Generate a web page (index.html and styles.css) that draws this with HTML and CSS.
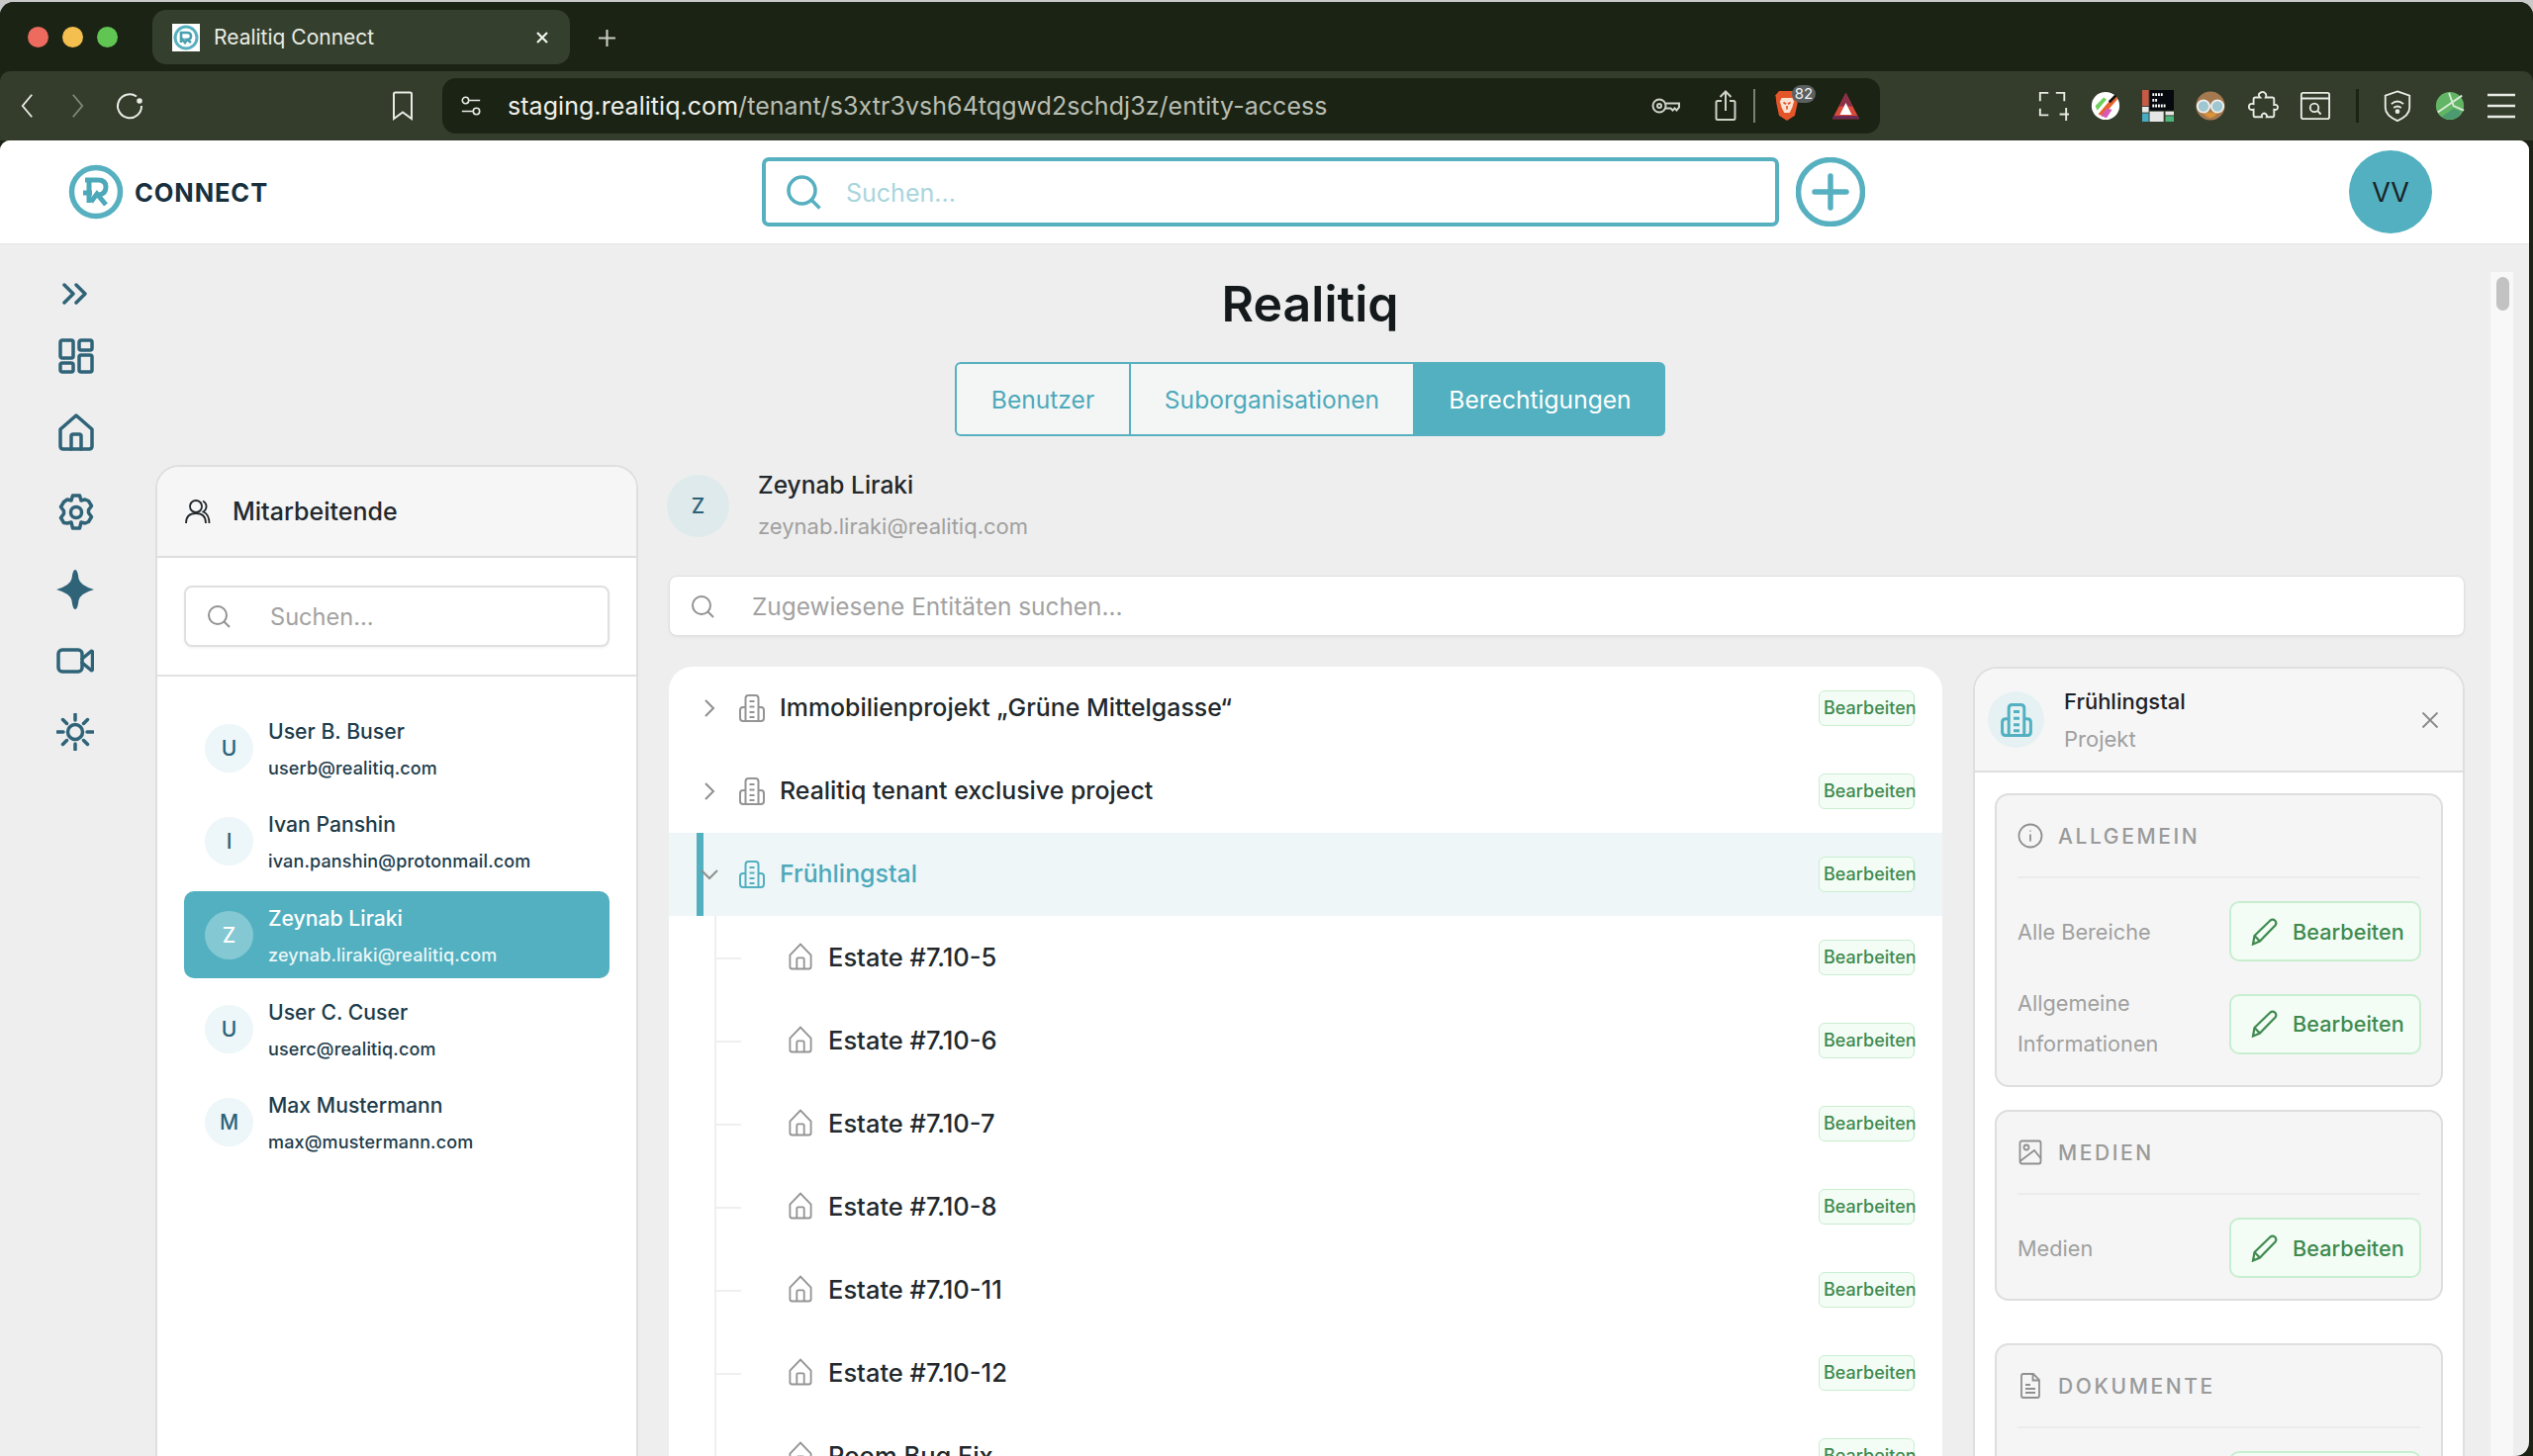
FILE: index.html
```html
<!DOCTYPE html>
<html lang="de">
<head>
<meta charset="utf-8">
<title>Realitiq Connect</title>
<link rel="stylesheet" href="styles.css">
</head>
<body>
<svg class="defs" width="0" height="0" aria-hidden="true">
  <defs>
    <symbol id="i-search" viewBox="0 0 24 24"><circle cx="11" cy="11" r="9"/><path d="M17.5 17.5 23 23"/></symbol>
    <symbol id="i-building" viewBox="0 0 26 30"><path d="M6.500 28V5q0-3 3-3h7q3 0 3 3v23"/><path d="M6.500 14H4q-3 0-3 3v8q0 3 3 3h18q3 0 3-3v-8q0-3-3-3h-2.500"/><path d="M10.500 8h5M10.500 13.500h5M10.500 19h5M10.500 24h5"/></symbol>
    <symbol id="i-house" viewBox="0 0 26 30"><path d="M1.500 13.500 13 1.500l11.500 12V26q0 2.500-2.500 2.500H4q-2.500 0-2.500-2.500z"/><path d="M9 28.500V18q0-1.500 1.500-1.500h5q1.500 0 1.500 1.500v10.500"/></symbol>
    <symbol id="i-pen" viewBox="0 0 28 28"><path d="M2 26.500 3.500 18 19.500 2.500q2.500-1.800 4.800.3 2 2.300.2 4.700L9 23.500z"/><path d="M3.500 18 9 23.500"/></symbol>
    <symbol id="i-chev" viewBox="0 0 12 20"><path d="M2 2l8 8-8 8"/></symbol>
  </defs>
</svg>

<div class="window">
  <div class="tabbar">
    <div class="lights"><span class="light red"></span><span class="light amber"></span><span class="light green"></span></div>
    <div class="tab">
      <svg class="favicon" viewBox="0 0 28 28"><rect width="28" height="28" fill="#fff"/><circle cx="14" cy="14" r="11" fill="none" stroke="#57b0c0" stroke-width="3"/><path d="M9 19V9h6q4 0 4 3.500T15 16l4 3M9 14l4 5 2-3" fill="none" stroke="#4a9fb0" stroke-width="2.600"/></svg>
      <span class="tab-title">Realitiq Connect</span>
      <svg class="tab-close" viewBox="0 0 14 14"><path d="M2 2l10 10M12 2 2 12"/></svg>
    </div>
    <svg class="new-tab" viewBox="0 0 18 18"><path d="M9 1v16M1 9h16"/></svg>
  </div>

  <div class="toolbar">
    <svg class="tb back" viewBox="0 0 16 28"><path d="M13 2 3 14l10 12"/></svg>
    <svg class="tb forward" viewBox="0 0 16 28"><path d="M3 2l10 12L3 26"/></svg>
    <svg class="tb reload" viewBox="0 0 30 30"><path d="M22 5.500A12 12 0 1 0 27 15"/><circle cx="25" cy="10" r="1.800" fill="#e8ebe4"/></svg>
    <svg class="tb bookmark" viewBox="0 0 22 30"><path d="M2 3q0-1.500 1.500-1.500h15Q20 1.500 20 3v25l-9-6.500L2 28z"/></svg>
    <div class="urlbar">
      <svg class="tb tune" viewBox="0 0 24 24"><circle cx="6" cy="6" r="3.500"/><path d="M10 6h12M2 18h12"/><circle cx="18" cy="18" r="3.500"/></svg>
      <span class="url"><span class="url-host">staging.realitiq.com</span>/tenant/s3xtr3vsh64tqgwd2schdj3z/entity-access</span>
      <svg class="tb key" viewBox="0 0 30 20"><circle cx="8" cy="10" r="6.500"/><circle cx="8" cy="10" r="2"/><path d="M14.500 7.500H28v4l-2.500 3-2-2-2 2-2-2h-5"/></svg>
      <svg class="tb share" viewBox="0 0 22 32"><path d="M7 11H3q-1.500 0-1.500 1.500v16Q1.500 30 3 30h16q1.500 0 1.500-1.500v-16Q20.500 11 19 11h-4"/><path d="M11 21V2M5.500 7 11 1.500 16.500 7"/></svg>
      <span class="vline"></span>
      <span class="brave">
        <svg class="brave-shield" viewBox="0 0 28 36"><path d="M5 1h18l4 5-1 9-3 14-9 6-9-6-3-14L1 6z" fill="#e4562a"/><path d="M8 9h12l2 4-2 7-3 6h-6l-3-6-2-7z" fill="#fbe3d4"/><path d="M10 14l3 2M18 14l-3 2M14 18v4" stroke="#e4562a" stroke-width="2" fill="none"/></svg>
        <span class="brave-badge">82</span>
      </span>
      <svg class="bat" viewBox="0 0 34 34"><path d="M17 1 33 32H1z" fill="#d84a3a"/><path d="M17 1 25 17H9z" fill="#8c2f48"/><path d="M17 13 24 27H10z" fill="#fff"/><path d="M1 32h32l-2-4H3z" fill="#6c2a55"/></svg>
    </div>
    <div class="extensions">
      <svg class="tb ext" viewBox="0 0 34 34"><path d="M12 3H3v9M3 20v7h9M20 3h9v9M31 19v14M24 26h14"/></svg>
      <svg class="ext ext-solid" viewBox="0 0 34 34"><circle cx="17" cy="17" r="15" fill="#fff"/><path d="M9 26 26 6q5 0 3 5L14 28z" fill="#e8622d"/><path d="M6 17l9-9 3 2-10 12z" fill="#6ed05a"/><path d="M12 28l6-8 6 1-6 9z" fill="#d65ab6"/><path d="M20 12l7-7 2 2-7 7z" fill="#111"/></svg>
      <svg class="ext ext-solid" viewBox="0 0 34 34"><rect x="8" y="0" width="26" height="22" fill="#05080d"/><rect x="0" y="0" width="7" height="17" fill="#c75a45"/><rect x="0" y="18" width="7" height="6" fill="#e8e8e8"/><rect x="0" y="25" width="7" height="9" fill="#48a9c5"/><rect x="8" y="23" width="15" height="11" fill="#e6e6e6"/><rect x="25" y="23" width="9" height="4" fill="#e6e6e6"/><rect x="25" y="28" width="9" height="6" fill="#4eb47c"/><path d="M11 5h12M11 11h6M11 17h15" stroke="#fff" stroke-width="3" stroke-dasharray="2 1"/></svg>
      <svg class="ext ext-solid" viewBox="0 0 34 34"><circle cx="17" cy="17" r="15.500" fill="#a5794f"/><path d="M9 24q8 12 16 0z" fill="#d9913a"/><circle cx="9.500" cy="17.500" r="6.500" fill="#9fc7cf" stroke="#eee" stroke-width="2"/><circle cx="24.500" cy="17.500" r="6.500" fill="#9fc7cf" stroke="#eee" stroke-width="2"/></svg>
      <svg class="tb ext" viewBox="0 0 34 34"><path d="M13 4q4-4 7 0 1 2 0 4h7q2 0 2 2v6q3-1 4 2 0 4-4 3h0v6q0 2-2 2h-6q1-3-2-4-4 0-3 4H9q-2 0-2-2v-6q-5 1-5-3t5-3v-5q0-2 2-2h5q-2-2-1-4z"/></svg>
      <svg class="tb ext" viewBox="0 0 34 34"><rect x="2" y="3" width="30" height="28" rx="2"/><path d="M2 9h30"/><circle cx="16" cy="19" r="4.500"/><path d="M19.500 22.500 23 26"/></svg>
      <span class="vline dark"></span>
      <svg class="tb ext" viewBox="0 0 34 34"><path d="M17 1.500 30 6v13q0 8-13 14Q4 27 4 19V6z"/><path d="M10.500 15q6.500-5.500 13 0M13 19q4-3 8 0"/><circle cx="17" cy="23" r="1.500" fill="#e8ebe4"/></svg>
      <svg class="ext ext-solid" viewBox="0 0 34 34"><circle cx="17" cy="17" r="15" fill="#62b564"/><path d="M4 24 30 6M16 3l5 14 11 5" stroke="#d7ecd5" stroke-width="2" fill="none"/><path d="M8 29q9 5 18 0l3-6-8-3z" fill="#4b9a72"/></svg>
      <svg class="tb ext menu" viewBox="0 0 30 26"><path d="M1 2h28M1 13h28M1 24h28"/></svg>
    </div>
  </div>

  <div class="app">
    <header class="topbar">
      <div class="logo">
        <svg class="logo-mark" viewBox="0 0 56 56"><circle cx="28" cy="28" r="24.500" fill="none" stroke="#57b0c0" stroke-width="5.500"/><path d="M17 16h13q8 0 8 7t-7 8" fill="none" stroke="#4da9ba" stroke-width="5"/><path d="M21 15v24M15 29h9" fill="none" stroke="#4da9ba" stroke-width="5"/><path d="M23 38l6-8 9 11" fill="none" stroke="#4da9ba" stroke-width="5"/></svg>
        <span class="logo-text">CONNECT</span>
      </div>
      <label class="global-search">
        <svg class="icon search-icon-lg"><use href="#i-search"/></svg>
        <span class="global-placeholder">Suchen...</span>
      </label>
      <span class="spacer"></span>
      <svg class="plus" viewBox="0 0 70 70"><circle cx="35" cy="35" r="32.500"/><path d="M35 19v32M19 35h32"/></svg>
      <div class="avatar-vv">VV</div>
    </header>

    <div class="layout">
      <nav class="rail">
        <svg class="rail-icon rail-chev" viewBox="0 0 26 22"><path d="M2 2l9 9-9 9M14 2l9 9-9 9"/></svg>
        <svg class="rail-icon rail-grid" viewBox="0 0 36 36"><rect x="2" y="2" width="13" height="18" rx="2"/><rect x="21" y="2" width="13" height="10" rx="2"/><rect x="2" y="25" width="13" height="9" rx="2"/><rect x="21" y="17" width="13" height="17" rx="2"/></svg>
        <svg class="rail-icon rail-home" viewBox="0 0 36 38"><path d="M2 16 18 2l16 14v17q0 3-3 3H5q-3 0-3-3z"/><path d="M13 36V23q0-2 2-2h6q2 0 2 2v13"/></svg>
        <svg class="rail-icon rail-gear" viewBox="0 0 36 38"><path d="M14.500 2h7l1.500 5 4-1 3.500 1.500 3 5-3 4v3l3 4-3 5-3.500 1.500-4-1-1.500 6h-7l-1.500-6-4 1L5.500 29.500l-3-5 3-4v-3l-3-4 3-5L9 6l4 1z"/><circle cx="18" cy="19" r="5.500"/></svg>
        <svg class="rail-icon rail-star" viewBox="0 0 38 40"><path class="fill" d="M19 0q2.500 0 3.500 9 1.500 7 15.500 11-14 4-15.500 11Q21.500 40 19 40t-3.500-9Q14 24 0 20q14-4 15.500-11Q16.500 0 19 0z"/></svg>
        <svg class="rail-icon rail-video" viewBox="0 0 38 26"><rect x="2" y="2" width="24" height="22" rx="4"/><path d="M26 11 35 3.500q1.500-.5 1.500 1v17q0 1.500-1.500 1L26 15"/></svg>
        <svg class="rail-icon rail-sun" viewBox="0 0 38 38"><circle cx="19" cy="19" r="7.500"/><path d="M19 1v6M19 31v6M1 19h6M31 19h6M6.500 6.500l4 4M27.500 27.500l4 4M6.500 31.500l4-4M27.500 10.500l4-4"/></svg>
      </nav>

      <main class="content">
        <h1 class="page-title">Realitiq</h1>
        <div class="segments">
          <span class="seg seg-a">Benutzer</span>
          <span class="seg seg-b">Suborganisationen</span>
          <span class="seg seg-c active">Berechtigungen</span>
        </div>

        <div class="columns">
          <section class="staff">
            <div class="staff-head">
              <svg class="staff-icon" viewBox="0 0 26 26"><circle cx="11" cy="8" r="6"/><path d="M1 25q0-10 10-10t10 10M18 2.500q4 2 3.500 6.500-.5 3-3 4.500 6 2.500 6 11.500"/></svg>
              <span>Mitarbeitende</span>
            </div>
            <div class="staff-searchwrap">
              <div class="field staff-field">
                <svg class="icon field-icon"><use href="#i-search"/></svg>
                <span class="placeholder">Suchen...</span>
              </div>
            </div>
            <ul class="people">
              <li class="person"><span class="pav">U</span><span class="ptext"><span class="pname">User B. Buser</span><span class="pmail">userb@realitiq.com</span></span></li>
              <li class="person"><span class="pav">I</span><span class="ptext"><span class="pname">Ivan Panshin</span><span class="pmail">ivan.panshin@protonmail.com</span></span></li>
              <li class="person selected"><span class="pav">Z</span><span class="ptext"><span class="pname">Zeynab Liraki</span><span class="pmail">zeynab.liraki@realitiq.com</span></span></li>
              <li class="person"><span class="pav">U</span><span class="ptext"><span class="pname">User C. Cuser</span><span class="pmail">userc@realitiq.com</span></span></li>
              <li class="person"><span class="pav">M</span><span class="ptext"><span class="pname">Max Mustermann</span><span class="pmail">max@mustermann.com</span></span></li>
            </ul>
          </section>

          <section class="detail">
            <div class="user-head">
              <span class="user-av">Z</span>
              <div class="user-text">
                <div class="user-name">Zeynab Liraki</div>
                <div class="user-mail">zeynab.liraki@realitiq.com</div>
              </div>
            </div>
            <div class="field entity-field">
              <svg class="icon field-icon"><use href="#i-search"/></svg>
              <span class="placeholder">Zugewiesene Entitäten suchen...</span>
            </div>
            <div class="split">
              <div class="tree">
                <div class="row"><svg class="chev"><use href="#i-chev"/></svg><svg class="ricon"><use href="#i-building"/></svg><span class="rname">Immobilienprojekt „Grüne Mittelgasse“</span><span class="badge">Bearbeiten</span></div>
                <div class="row"><svg class="chev"><use href="#i-chev"/></svg><svg class="ricon"><use href="#i-building"/></svg><span class="rname">Realitiq tenant exclusive project</span><span class="badge">Bearbeiten</span></div>
                <div class="row row-open"><svg class="chev chev-down"><use href="#i-chev"/></svg><svg class="ricon"><use href="#i-building"/></svg><span class="rname">Frühlingstal</span><span class="badge">Bearbeiten</span></div>
                <div class="children">
                  <div class="row child"><svg class="ricon"><use href="#i-house"/></svg><span class="rname">Estate #7.10-5</span><span class="badge">Bearbeiten</span></div>
                  <div class="row child"><svg class="ricon"><use href="#i-house"/></svg><span class="rname">Estate #7.10-6</span><span class="badge">Bearbeiten</span></div>
                  <div class="row child"><svg class="ricon"><use href="#i-house"/></svg><span class="rname">Estate #7.10-7</span><span class="badge">Bearbeiten</span></div>
                  <div class="row child"><svg class="ricon"><use href="#i-house"/></svg><span class="rname">Estate #7.10-8</span><span class="badge">Bearbeiten</span></div>
                  <div class="row child"><svg class="ricon"><use href="#i-house"/></svg><span class="rname">Estate #7.10-11</span><span class="badge">Bearbeiten</span></div>
                  <div class="row child"><svg class="ricon"><use href="#i-house"/></svg><span class="rname">Estate #7.10-12</span><span class="badge">Bearbeiten</span></div>
                  <div class="row child"><svg class="ricon"><use href="#i-house"/></svg><span class="rname">Room Bug Fix</span><span class="badge">Bearbeiten</span></div>
                </div>
              </div>

              <aside class="inspector">
                <div class="insp-head">
                  <span class="insp-av"><svg class="insp-building"><use href="#i-building"/></svg></span>
                  <div class="insp-text">
                    <div class="insp-title">Frühlingstal</div>
                    <div class="insp-sub">Projekt</div>
                  </div>
                  <svg class="insp-close" viewBox="0 0 18 18"><path d="M1.500 1.500l15 15M16.500 1.500l-15 15"/></svg>
                </div>
                <div class="insp-body">
                  <div class="card">
                    <div class="card-head">
                      <svg class="card-icon" viewBox="0 0 26 26"><circle cx="13" cy="13" r="11.500"/><path d="M13 11.500v7M13 7.500v1"/></svg>
                      <span>ALLGEMEIN</span>
                    </div>
                    <div class="perm"><span class="perm-label">Alle Bereiche</span><span class="edit"><svg class="pen"><use href="#i-pen"/></svg>Bearbeiten</span></div>
                    <div class="perm perm-next"><span class="perm-label two">Allgemeine Informationen</span><span class="edit"><svg class="pen"><use href="#i-pen"/></svg>Bearbeiten</span></div>
                  </div>
                  <div class="card">
                    <div class="card-head">
                      <svg class="card-icon" viewBox="0 0 26 26"><rect x="2.500" y="1.500" width="21" height="23" rx="2"/><circle cx="9" cy="8" r="2.500"/><path d="M2.500 22 17 11l6.500 8"/></svg>
                      <span>MEDIEN</span>
                    </div>
                    <div class="perm"><span class="perm-label">Medien</span><span class="edit"><svg class="pen"><use href="#i-pen"/></svg>Bearbeiten</span></div>
                  </div>
                  <div class="card">
                    <div class="card-head">
                      <svg class="card-icon" viewBox="0 0 26 26"><path d="M4 3q0-2 2-2h10l6 6v16q0 2-2 2H6q-2 0-2-2z"/><path d="M15.500 1.500v6h6M8 12h5M8 16h10M8 20h10"/></svg>
                      <span>DOKUMENTE</span>
                    </div>
                    <div class="perm"><span class="perm-label">Dokumente</span><span class="edit"><svg class="pen"><use href="#i-pen"/></svg>Bearbeiten</span></div>
                  </div>
                </div>
              </aside>
            </div>
          </section>
        </div>
      </main>

      <div class="scrolltrack"><span class="scrollthumb"></span></div>
    </div>
  </div>
</div>
</body>
</html>
```
FILE: styles.css
```css
* { box-sizing: border-box; }
html, body { margin: 0; height: 100%; overflow: hidden; }
body { background: #c9c9c9; font-family: Inter, "Liberation Sans", sans-serif; color: #22282c; }
.defs { position: absolute; }
svg { display: block; flex: none; }

.window { height: 1472px; margin-top: 2px; display: flex; flex-direction: column; background: #1b2314; border-radius: 14px 14px 0 0; overflow: hidden; }

/* browser chrome */
.tabbar { height: 70px; flex: none; display: flex; align-items: flex-start; padding-top: 8px; background: #1b2314; }
.lights { display: flex; gap: 14px; padding: 17px 0 0 28px; width: 154px; }
.light { width: 21px; height: 21px; border-radius: 50%; }
.red { background: #ec6a5e; }
.amber { background: #f4bf4f; }
.green { background: #61c554; }
.tab { width: 422px; height: 55px; border-radius: 14px; background: #353f2d; display: flex; align-items: center; padding-left: 20px; }
.favicon { width: 28px; height: 28px; }
.tab-title { margin-left: 14px; font-size: 21px; color: #e9ece5; flex: 1; }
.tab-close { width: 14px; height: 14px; margin-right: 21px; fill: none; stroke: #f1f3ee; stroke-width: 2.200; }
.new-tab { width: 19px; height: 19px; margin: 19px 0 0 28px; fill: none; stroke: #c9cdc4; stroke-width: 2; }

.toolbar { height: 70px; flex: none; background: #343d2c; display: flex; align-items: center; border-radius: 10px 10px 0 0; padding-left: 20px; }
.tb { fill: none; stroke: #e8ebe4; stroke-width: 2; }
.back { width: 15px; height: 28px; }
.forward { width: 15px; height: 28px; margin-left: 36px; stroke: #7f867a; }
.reload { width: 30px; height: 30px; margin-left: 30px; }
.bookmark { width: 22px; height: 30px; margin-left: 250px; }
.urlbar { width: 1453px; height: 56px; margin-left: 29px; border-radius: 14px; background: #1b2314; display: flex; align-items: center; padding-left: 18px; }
.tune { width: 22px; height: 24px; stroke-width: 1.800; }
.url { margin-left: 26px; font-size: 25px; color: #b8bdb2; white-space: nowrap; flex: 1; letter-spacing: .05px; }
.url-host { color: #eef0ea; }
.key { width: 30px; height: 20px; stroke: #cfd3ca; }
.share { width: 22px; height: 32px; margin-left: 34px; stroke: #cfd3ca; }
.vline { width: 2px; height: 34px; margin-left: 17px; background: #7b8075; }
.brave { position: relative; display: block; margin-left: 19px; width: 36px; height: 32px; }
.brave-shield { width: 26px; height: 32px; }
.brave-badge { position: absolute; left: 18px; top: -5px; width: 24px; height: 18px; border-radius: 9px; background: #5b6060; color: #f2f2f2; font-size: 15px; line-height: 18px; text-align: center; }
.bat { width: 29px; height: 29px; margin: 0 20px 0 22px; }
.extensions { display: flex; align-items: center; margin-left: 159px; }
.ext { width: 32px; height: 34px; margin-right: 21px; }
.ext-solid { width: 32px; height: 36px; }
.extensions .vline { margin: 0 23px 0 4px; width: 3px; }
.vline.dark { background: #1b2314; }
.extensions .menu { width: 30px; height: 26px; margin: 0; stroke-width: 2.400; }

.app { flex: 1; min-height: 0; margin: 0 4px 2px 0; background: #eee; border-radius: 10px 10px 14px 0; overflow: hidden; display: flex; flex-direction: column; }

/* top bar */
.topbar { height: 104px; flex: none; background: #fff; display: flex; align-items: center; padding-left: 69px; box-shadow: 0 1px 1px #e6e6e6; }
.logo { width: 701px; display: flex; align-items: center; gap: 11px; }
.logo-mark { width: 56px; height: 56px; }
.logo-text { font-size: 25.500px; font-weight: 700; color: #17303f; letter-spacing: .9px; }
.global-search { width: 1028px; height: 70px; border: 4px solid #57b0c0; border-radius: 7px; display: flex; align-items: center; padding-left: 20px; }
.search-icon-lg { width: 36px; height: 36px; fill: none; stroke: #57b0c0; stroke-width: 2.400; }
.global-placeholder { margin: 2px 0 0 25px; font-size: 25px; color: #a9d5dd; }
.spacer { width: 17px; }
.plus { width: 70px; height: 70px; fill: none; stroke: #57b0c0; stroke-width: 5.500; stroke-linecap: round; }
.avatar-vv { width: 84px; height: 84px; margin-left: 489px; border-radius: 50%; background: #52b0c0; display: flex; align-items: center; justify-content: center; font-size: 27px; color: #1a2226; }

/* shell */
.layout { flex: 1; min-height: 0; display: flex; }
.rail { width: 157px; flex: none; position: relative; display: flex; flex-direction: column; }
.rail-icon { fill: none; stroke: #2f6378; stroke-width: 3.500; stroke-linecap: round; stroke-linejoin: round; }
.rail-icon .fill { fill: #2f6378; stroke: none; }
.rail-chev { width: 26px; height: 22px; margin: 40px 0 0 63px; }
.rail-grid { width: 36px; height: 36px; margin: 34px 0 0 59px; }
.rail-home { width: 36px; height: 38px; margin: 40px 0 0 59px; }
.rail-gear { width: 36px; height: 38px; margin: 43px 0 0 59px; }
.rail-star { width: 38px; height: 40px; margin: 39px 0 0 57px; }
.rail-video { width: 38px; height: 26px; margin: 39px 0 0 57px; }
.rail-sun { width: 38px; height: 38px; margin: 40px 0 0 57px; }

.content { width: 2360px; flex: none; padding-right: 26px; min-height: 0; display: flex; flex-direction: column; align-items: center; overflow: hidden; }
.page-title { margin: 31px 0 0; font-size: 50px; line-height: 60px; font-weight: 600; color: #14191c; }
.segments { margin-top: 29px; height: 75px; display: flex; flex: none; }
.seg { display: flex; align-items: center; justify-content: center; font-size: 24.600px; color: #4da9ba; background: #f4f6f6; border: 2px solid #57b0c0; border-right: 0; }
.seg-a { width: 176px; border-radius: 6px 0 0 6px; }
.seg-b { width: 287px; }
.seg-c { width: 255px; border-radius: 0 6px 6px 0; }
.seg.active { background: #52b0c0; color: #fff; }

.columns { margin-top: 29px; width: 100%; flex: 1; min-height: 0; display: flex; gap: 31px; }

/* staff panel */
.staff { width: 488px; flex: none; background: #fff; border: 2px solid #dfdfdf; border-bottom: 0; border-radius: 24px 24px 0 0; overflow: hidden; }
.staff-head { height: 92px; background: #f6f6f6; border-bottom: 2px solid #dedede; display: flex; align-items: center; padding-left: 28px; gap: 22px; font-size: 25px; font-weight: 500; color: #22282c; }
.staff-icon { width: 26px; height: 26px; fill: none; stroke: #22282c; stroke-width: 1.800; }
.staff-searchwrap { height: 120px; border-bottom: 2px solid #e2e2e2; padding: 28px 27px 0 27px; }
.field { display: flex; align-items: center; background: #fff; border: 2px solid #e0e0e0; border-radius: 8px; box-shadow: 0 1px 3px rgba(0,0,0,.06); }
.staff-field { height: 62px; padding-left: 21px; }
.icon { display: block; }
.field-icon { width: 24px; height: 24px; fill: none; stroke: #929292; stroke-width: 2; }
.placeholder { font-size: 24px; color: #a2a2a2; }
.staff-field .placeholder { margin-left: 40px; font-size: 23.600px; }
.people { list-style: none; margin: 0; padding: 28px 27px 0 27px; display: flex; flex-direction: column; gap: 6.700px; }
.person { height: 88px; border-radius: 10px; display: flex; align-items: center; padding-left: 21px; color: #1d3c4b; }
.pav { width: 49px; height: 49px; border-radius: 50%; background: #edf6f8; display: flex; align-items: center; justify-content: center; font-size: 21px; font-weight: 500; color: #2d6277; flex: none; }
.ptext { margin-left: 15px; padding-top: 3px; display: flex; flex-direction: column; }
.pname { font-size: 21.200px; font-weight: 500; line-height: 38px; }
.pmail { font-size: 18px; font-weight: 500; line-height: 38px; letter-spacing: .15px; }
.person.selected { background: #52b0c0; color: #fff; }
.selected .pav { background: #84c8d3; color: #fff; }
.selected .pmail { color: #eaf6f8; }

/* detail */
.detail { flex: 1; min-width: 0; display: flex; flex-direction: column; }
.user-head { display: flex; height: 112px; align-items: flex-start; flex: none; }
.user-av { width: 63px; height: 63px; margin: 10px 0 0 -2px; border-radius: 50%; background: #dfeaec; display: flex; align-items: center; justify-content: center; font-size: 21px; font-weight: 500; color: #2d6277; }
.user-text { margin-left: 29px; }
.user-name { font-size: 24.500px; line-height: 40px; font-weight: 500; color: #22282c; }
.user-mail { font-size: 22px; line-height: 44px; font-weight: 400; color: #a0a0a0; }
.entity-field { height: 61px; padding-left: 21px; flex: none; border-width: 1px; }
.entity-field .placeholder { margin-left: 38px; font-size: 24.400px; }
.split { margin-top: 31px; flex: 1; min-height: 0; display: flex; gap: 31px; }

.tree { width: 1287px; flex: none; background: #fff; border-radius: 24px 24px 0 0; overflow: hidden; }
.row { height: 84px; display: flex; align-items: center; position: relative; padding-right: 28px; font-size: 24.900px; font-weight: 500; color: #22282c; }
.chev { width: 12px; height: 20px; margin-left: 35px; fill: none; stroke: #8f8f8f; stroke-width: 2; }
.chev-down { transform: rotate(90deg); }
.ricon { width: 26px; height: 30px; margin-left: 24px; fill: none; stroke: #949494; stroke-width: 2; }
.rname { margin: 0 0 2px 15px; flex: 1; white-space: nowrap; }
.badge { width: 97px; height: 36px; flex: none; border: 1.500px solid #c8eed0; border-radius: 6px; background: #f3fdf5; color: #3f8a4f; font-size: 18px; line-height: 33px; padding-left: 4px; white-space: nowrap; }
.row-open { background: #eef6f8; color: #4da9ba; }
.row-open::before { content: ""; position: absolute; left: 28px; top: 0; bottom: 0; width: 7px; background: #52b0c0; }
.row-open .ricon { stroke: #52b0c0; }
.row-open .chev { position: relative; }
.children { position: relative; }
.children::before { content: ""; position: absolute; left: 46px; top: 0; bottom: 0; width: 2px; background: #efefef; }
.child { padding-left: 121px; font-size: 25.500px; }
.child::before { content: ""; position: absolute; left: 46px; top: 50%; width: 27px; height: 2px; background: #efefef; }
.child .ricon { width: 24px; height: 28px; margin: 0 0 2px; }
.child .rname { margin-left: 16px; }

/* inspector */
.inspector { flex: 1; min-width: 0; background: #fff; border: 2px solid #dfdfdf; border-bottom: 0; border-radius: 24px 24px 0 0; overflow: hidden; }
.insp-head { height: 105px; background: #f6f6f6; border-bottom: 2px solid #dedede; display: flex; align-items: center; padding-left: 13px; }
.insp-av { width: 57px; height: 57px; border-radius: 50%; background: #e6f1f3; display: flex; align-items: center; justify-content: center; flex: none; }
.insp-building { width: 32px; height: 36px; fill: none; stroke: #52b0c0; stroke-width: 2.500; }
.insp-text { margin-left: 20px; flex: 1; }
.insp-title { font-size: 22px; line-height: 38px; font-weight: 500; color: #1d2225; }
.insp-sub { font-size: 22px; line-height: 38px; color: #a0a0a0; }
.insp-close { width: 18px; height: 18px; margin-right: 24px; fill: none; stroke: #8a8a8a; stroke-width: 1.800; }
.insp-body { padding: 21px 20px 0; display: flex; flex-direction: column; gap: 23px; }
.card { background: #f5f5f5; border: 2px solid #dedede; border-radius: 14px; padding: 0 21px 21px; flex: none; }
.card + .card + .card { margin-top: 20px; }
.card-head { height: 84px; display: flex; align-items: center; gap: 15px; border-bottom: 2px solid #ececec; font-size: 21px; font-weight: 500; letter-spacing: 2.600px; color: #9a9a9a; }
.card-icon { width: 26px; height: 26px; fill: none; stroke: #8f8f8f; stroke-width: 1.800; }
.perm { display: flex; align-items: center; justify-content: space-between; margin-top: 23px; }
.perm-next { margin-top: 22px; }
.perm-label { font-size: 21.700px; color: #a0a0a0; }
.perm-label.two { width: 170px; line-height: 41px; }
.edit { width: 194px; height: 61px; flex: none; margin-right: -1px; border: 2px solid #c8eed0; border-radius: 10px; background: #f3fdf5; display: flex; align-items: center; padding-left: 20px; gap: 14px; font-size: 21.700px; font-weight: 500; color: #3f8a4f; }
.pen { width: 28px; height: 28px; fill: none; stroke: #3f8a4f; stroke-width: 2.200; }

.scrolltrack { width: 23px; flex: none; margin-top: 29px; background: #f8f8f8; padding: 5px 6px 0 6px; }
.scrollthumb { display: block; width: 13px; height: 34px; border-radius: 7px; background: #c2c2c2; }
```
